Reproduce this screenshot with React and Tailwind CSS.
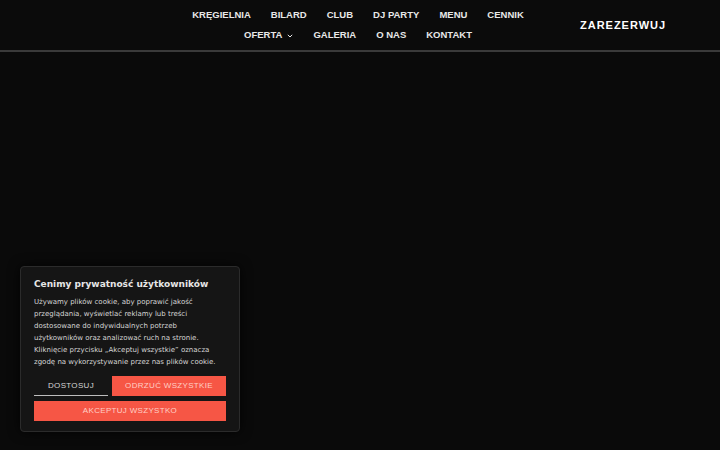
const row1 = ["KRĘGIELNIA", "BILARD", "CLUB", "DJ PARTY", "MENU", "CENNIK"];
const row2 = ["GALERIA", "O NAS", "KONTAKT"];

const Chevron = () => (
  <svg width="6" height="4" viewBox="0 0 6 4" className="ml-[5px] mt-[2px]">
    <path d="M0.8 0.8 L3 3 L5.2 0.8" fill="none" stroke="currentColor" strokeWidth="1" />
  </svg>
);

const App = () => {
  return (
    <div className="w-[720px] h-[450px] bg-[#0a0a0a] overflow-hidden relative" style={{ fontFamily: '"Liberation Sans", Arial, sans-serif' }}>
      <header className="h-[52px] flex items-center border-b-2 border-[#3a3a3a] bg-[#0b0b0b]">
        <nav className="w-[356px] ml-[180px] -mt-[1px] flex flex-col items-center gap-[9px] text-[9.5px] leading-[11px] font-bold text-[#e8e8e8]">
          <div className="flex gap-[20px]">
            {row1.map((item) => (
              <span key={item}>{item}</span>
            ))}
          </div>
          <div className="flex gap-[20px]">
            <span className="flex items-center">OFERTA<Chevron /></span>
            {row2.map((item) => (
              <span key={item}>{item}</span>
            ))}
          </div>
        </nav>
        <span className="ml-[44px] mt-[1px] text-[11px] font-bold tracking-[0.09em] text-white">ZAREZERWUJ</span>
      </header>

      <div className="absolute left-[20px] top-[266px] w-[220px] bg-[#151515] border border-[#2b2b2b] rounded-[4px] shadow-[0_0_12px_rgba(0,0,0,0.8)] px-[13px] pt-[10px] pb-[10px]" style={{ fontFamily: '"DejaVu Sans", sans-serif' }}>
        <h2 className="text-[9px] font-bold text-[#e6e6e6] leading-[14px] whitespace-nowrap">Cenimy prywatność użytkowników</h2>
        <p className="mt-[5px] text-[7px] leading-[12px] text-[#d6d6d6]">
          Używamy plików cookie, aby poprawić jakość przeglądania, wyświetlać reklamy lub treści dostosowane do indywidualnych potrzeb użytkowników oraz analizować ruch na stronie. Kliknięcie przycisku „Akceptuj wszystkie” oznacza zgodę na wykorzystywanie przez nas plików cookie.
        </p>
        <div className="mt-[8px] flex gap-[4px]" style={{ fontFamily: '"Liberation Sans", Arial, sans-serif' }}>
          <button className="w-[74px] h-[20px] border-b border-[#bdbdbd] text-[8px] tracking-[0.04em] text-[#d6d6d6]">DOSTOSUJ</button>
          <button className="flex-1 h-[20px] bg-[#f65645] text-[8px] tracking-[0.04em] text-[#ffcfc6]">ODRZUĆ WSZYSTKIE</button>
        </div>
        <button className="mt-[4px] w-full h-[20px] bg-[#f65645] text-[8px] tracking-[0.04em] text-[#ffcfc6]" style={{ fontFamily: '"Liberation Sans", Arial, sans-serif' }}>AKCEPTUJ WSZYSTKO</button>
      </div>
    </div>
  );
};

export default App;
